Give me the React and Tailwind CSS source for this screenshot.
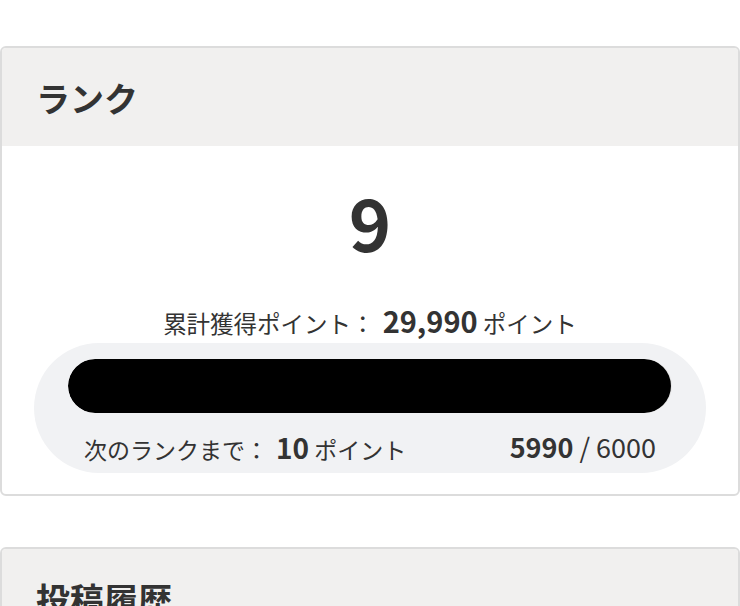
const font = { fontFamily: '"Noto Sans CJK JP", "Noto Sans", sans-serif' }

function CardHeader({ title }) {
  return (
    <div className="bg-[#f1f0ef] h-[98px] flex items-center pl-[34px]">
      <h2 className="text-[34px] font-bold text-[#333]">{title}</h2>
    </div>
  )
}

function RankCard() {
  const current = 5990
  const goal = 6000
  const pct = Math.min(100, (current / goal) * 100)

  return (
    <section className="border-2 border-[#dcdcdc] rounded-md overflow-hidden bg-white">
      <CardHeader title="ランク" />
      <div className="px-8 pt-[39px] pb-[21px] text-[#333]">
        <p className="text-center text-[72px] font-bold leading-none">9</p>

        <p className="mt-[47px] text-center text-[23.5px] leading-8">
          累計獲得ポイント：
          <span className="ml-2 text-[29px] font-bold">29,990</span> ポイント
        </p>

        {/* progress pill */}
        <div className="mt-[4px] rounded-full bg-[#f1f2f4] px-[34px] pt-4 pb-[10px]">
          <div className="h-[54px] rounded-full bg-[#e5e5e5] overflow-hidden">
            <div className="h-full rounded-full bg-black" style={{ width: `${pct}%` }} />
          </div>
          <div className="mt-[18px] px-4 flex items-center justify-between h-8">
            <p className="text-[23px]">
              次のランクまで：
              <span className="ml-2 text-[28px] font-bold">10</span> ポイント
            </p>
            <p className="text-[27px]">
              <span className="font-bold">5990</span> / 6000
            </p>
          </div>
        </div>
      </div>
    </section>
  )
}

export default function App() {
  return (
    <div className="min-h-screen bg-white pt-[46px]" style={font}>
      <RankCard />
      <section className="mt-[51px] border-2 border-[#dcdcdc] rounded-md overflow-hidden bg-white">
        <CardHeader title="投稿履歴" />
        <div className="h-40" />
      </section>
    </div>
  )
}
